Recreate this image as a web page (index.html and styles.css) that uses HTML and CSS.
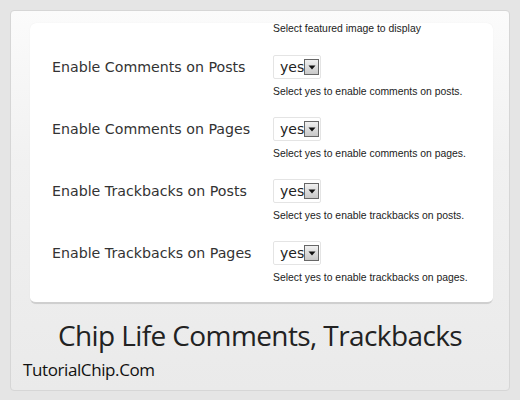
FILE: index.html
```html
<!DOCTYPE html>
<html>
<head>
<meta charset="utf-8">
<link rel="stylesheet" href="styles.css">
</head>
<body>
<div class="frame">
  <div class="card">
    <div class="top-help">Select featured image to display</div>
    <div class="row">
      <div class="label">Enable Comments on Posts</div>
      <div class="field">
        <div class="select"><span class="val">yes</span><span class="btn"><svg width="8" height="5" viewBox="0 0 8 5"><path d="M0.5 0.5h7L4 4.5z" fill="#111"/></svg></span></div>
        <div class="help">Select yes to enable comments on posts.</div>
      </div>
    </div>
    <div class="row">
      <div class="label">Enable Comments on Pages</div>
      <div class="field">
        <div class="select"><span class="val">yes</span><span class="btn"><svg width="8" height="5" viewBox="0 0 8 5"><path d="M0.5 0.5h7L4 4.5z" fill="#111"/></svg></span></div>
        <div class="help">Select yes to enable comments on pages.</div>
      </div>
    </div>
    <div class="row">
      <div class="label">Enable Trackbacks on Posts</div>
      <div class="field">
        <div class="select"><span class="val">yes</span><span class="btn"><svg width="8" height="5" viewBox="0 0 8 5"><path d="M0.5 0.5h7L4 4.5z" fill="#111"/></svg></span></div>
        <div class="help">Select yes to enable trackbacks on posts.</div>
      </div>
    </div>
    <div class="row">
      <div class="label">Enable Trackbacks on Pages</div>
      <div class="field">
        <div class="select"><span class="val">yes</span><span class="btn"><svg width="8" height="5" viewBox="0 0 8 5"><path d="M0.5 0.5h7L4 4.5z" fill="#111"/></svg></span></div>
        <div class="help">Select yes to enable trackbacks on pages.</div>
      </div>
    </div>
  </div>
  <div class="title">Chip Life Comments, Trackbacks</div>
  <div class="brand">TutorialChip.Com</div>
</div>
</body>
</html>
```

FILE: styles.css
```css
html, body {
  margin: 0;
  padding: 0;
}
body {
  background: #e5e5e5;
  width: 520px;
  height: 400px;
  overflow: hidden;
}
.frame {
  margin: 10px 0 0 10px;
  width: 500px;
  height: 381px;
  box-sizing: border-box;
  border: 1px solid #d6d6d6;
  border-radius: 4px;
  background: linear-gradient(#fbfbfb 0%, #f1f1f1 40%, #eaeaea 100%);
  padding-top: 12px;
}
.card {
  margin-left: 19px;
  width: 463px;
  height: 281px;
  box-sizing: border-box;
  background: #fff;
  border-radius: 6px;
  border-bottom: 2px solid #cfcfcf;
  box-shadow: 0 0 1px rgba(0,0,0,0.08);
  padding-left: 22px;
  overflow: hidden;
}
.top-help {
  margin-left: 221px;
  font-family: "Liberation Sans", Arial, sans-serif;
  font-size: 10.4px;
  line-height: 12px;
  color: #222;
  margin-bottom: 20px;
}
.row {
  display: grid;
  grid-template-columns: 221px 1fr;
  margin-bottom: 19px;
}
.label {
  font-family: "DejaVu Sans", Verdana, sans-serif;
  font-size: 14.2px;
  line-height: 24px;
  color: #333;
}
.field {
  display: flex;
  flex-direction: column;
  align-items: flex-start;
  gap: 7px;
}
.select {
  display: flex;
  align-items: center;
  height: 24px;
  width: 48px;
  box-sizing: border-box;
  border: 1px solid #e4e4e4;
  border-radius: 2px;
  padding-left: 6px;
  font-family: "DejaVu Sans", Verdana, sans-serif;
  font-size: 14px;
  color: #222;
}
.val {
  line-height: 20px;
  width: 24px;
}
.btn {
  width: 15px;
  height: 16px;
  box-sizing: border-box;
  border: 1px solid #666;
  background: linear-gradient(#f0f0f0, #c8c8c8);
  display: flex;
  align-items: center;
  justify-content: center;
}
.help {
  font-family: "Liberation Sans", Arial, sans-serif;
  font-size: 10.4px;
  line-height: 12px;
  color: #222;
}
.title {
  text-align: center;
  font-family: "Open Sans", sans-serif;
  font-size: 28px;
  line-height: 36px;
  color: #222;
  margin-top: 13px;
  letter-spacing: -0.6px;
}
.brand {
  margin-left: 12px;
  font-family: "Open Sans", sans-serif;
  font-size: 17px;
  line-height: 22px;
  color: #111;
  margin-top: 6px;
  letter-spacing: -0.4px;
}
```
